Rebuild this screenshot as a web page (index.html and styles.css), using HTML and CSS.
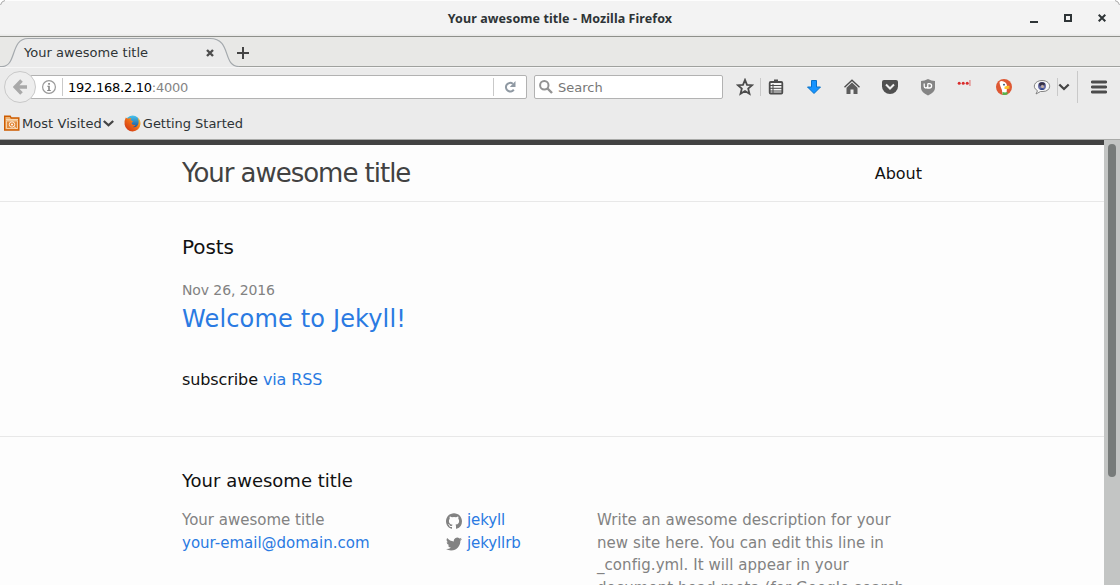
FILE: index.html
```
<!DOCTYPE html>
<html lang="en">
<head>
<meta charset="utf-8">
<title>Your awesome title</title>
<link rel="stylesheet" href="styles.css">
</head>
<body>
<div class="window">
  <header class="titlebar">
    <svg class="corner" width="5" height="5" viewBox="0 0 5 5"><path d="M0 0H5Q1 1 0 5Z" fill="#fff"/><path d="M5 .5Q1.300 1.300.5 5" fill="none" stroke="#aaa"/></svg>
    <span class="window-title">Your awesome title - Mozilla Firefox</span>
    <div class="window-buttons">
      <svg width="8" height="10" viewBox="0 0 8 10"><path d="M0 8h8v2H0z"/></svg>
      <svg width="8" height="10" viewBox="0 0 8 10"><path fill-rule="evenodd" d="M0 1h8v8H0zM2 3v4h4V3z"/></svg>
      <svg width="8" height="10" viewBox="0 0 8 10"><path d="M.7 1.700l6.600 6.600M7.300 1.700L.7 8.300" fill="none" stroke="#2e3436" stroke-width="2"/></svg>
    </div>
    <svg class="corner corner-right" width="5" height="5" viewBox="0 0 5 5"><path d="M0 0H5Q1 1 0 5Z" fill="#fff"/><path d="M5 .5Q1.300 1.300.5 5" fill="none" stroke="#aaa"/></svg>
  </header>

  <div class="tabs">
    <div class="tab">
      <svg class="tab-shape" width="240" height="30" viewBox="0 0 240 30"><path d="M0 29.500H2C17 29.500 10 1.500 28 1.500H210C232 1.500 222 29.500 239 29.500V30H0Z" fill="#ebebeb"/><path d="M0 29.500H2C17 29.500 10 1.500 28 1.500H210C232 1.500 222 29.500 239 29.500" fill="none" stroke="#a4a9ad" stroke-width="1.200"/></svg>
      <span class="tab-label">Your awesome title</span>
      <svg class="tab-close" width="8" height="8" viewBox="0 0 8 8"><path d="M1 1l6 6M7 1L1 7" stroke="#4d4d4d" stroke-width="2.400"/></svg>
    </div>
    <svg class="tab-new" width="12" height="12" viewBox="0 0 12 12"><path d="M6 0v12M0 6h12" stroke="#444" stroke-width="2"/></svg>
  </div>

  <nav class="toolbar">
    <div class="back"><svg width="14" height="16" viewBox="0 0 14 16"><path d="M8.500 1.500L2.200 8l6.300 6.500M2.500 8H14" fill="none" stroke="#a9a9a9" stroke-width="3.600"/></svg></div>
    <div class="urlbar">
      <svg class="info" width="14" height="14" viewBox="0 0 14 14"><circle cx="7" cy="7" r="6.400" fill="none" stroke="#999" stroke-width="1.200"/><path d="M6.200 3h1.700v1.700H6.200zM5.300 5.800h2.500v4.300h1v1H5.200v-1h1V6.800h-.9z" fill="#858585"/></svg>
      <i class="rule"></i>
      <span class="address">192.168.2.10<span class="port">:4000</span></span>
      <i class="rule rule-reload"></i>
      <svg class="reload" width="12" height="12" viewBox="0 0 12 12"><path d="M8.800 2.700A4.300 4.300 0 1 0 9.800 8.600" fill="none" stroke="#8f99a3" stroke-width="2"/><path d="M11.500 0v6H5.800z" fill="#8f99a3"/></svg>
    </div>
    <div class="search"><svg width="14" height="14" viewBox="0 0 14 14"><circle cx="5.300" cy="5.300" r="4.200" fill="none" stroke="#929292" stroke-width="2"/><path d="M8.500 8.500l4.500 4.500" stroke="#929292" stroke-width="2.400"/></svg><span>Search</span></div>
    <svg class="star" width="18" height="18" viewBox="0 0 18 18"><path d="M9 1.900l2 4.900 5.200.4-4 3.400 1.300 5.200L9 13l-4.500 2.800 1.300-5.200-4-3.400L7 6.800z" fill="none" stroke="#4c4c4c" stroke-width="1.800"/></svg>
    <i class="rule rule-bookmark"></i>
    <div class="tools">
      <svg width="18" height="18" viewBox="0 0 18 18"><path d="M7 1.500h4v2H7z" fill="#4c4c4c"/><rect x="2.700" y="4" width="12.600" height="11.500" rx="1" fill="#f5f5f5" stroke="#4c4c4c" stroke-width="1.800"/><path d="M2 7.500h14M2 10.300h14M2 13h14M6 6v9" stroke="#4c4c4c" stroke-width="1"/></svg>
      <svg width="18" height="18" viewBox="0 0 18 18"><path d="M6.500 2.500h5v6.500h4L9 15.500 2.500 9h4z" fill="#1593ff" stroke="#0872c8"/></svg>
      <svg width="18" height="18" viewBox="0 0 18 18"><path d="M1.500 9.300L9 2.200l7.500 7.100" fill="none" stroke="#4c4c4c" stroke-width="1.400"/><path d="M3.500 9.700L9 4.600l5.500 5.100V16H10.500v-4.500h-3V16h-4z" fill="#5c5c5c"/></svg>
      <svg width="18" height="18" viewBox="0 0 18 18"><path d="M3 2h12q2 0 2 2v4.500a8 7.500 0 0 1-16 0V4q0-2 2-2z" fill="#4f4f4f"/><path d="M5 6.500l4 4 4-4" fill="none" stroke="#eee" stroke-width="2"/></svg>
      <svg width="18" height="18" viewBox="0 0 18 18"><path d="M9 1q3.500 2 7 2v7q0 4-7 7.500Q2 14 2 10V3q3.500 0 7-2z" fill="#858585"/><path d="M5.200 5.500v2.700q0 1.800 1.700 1.800T8.600 8.200M8.800 5.500V10h1.500q2.300 0 2.300-2.200t-2.300-2.200h-1.500" fill="none" stroke="#fff" stroke-width="1.300"/></svg>
      <svg width="18" height="18" viewBox="0 0 18 18"><g fill="#d92b2b"><circle cx="2.200" cy="5.200" r="1.500"/><circle cx="6.200" cy="5.200" r="1.500"/><circle cx="10.200" cy="5.200" r="1.500"/><path d="M12.500 2h.9v6h-.9z" opacity=".75"/></g></svg>
      <svg width="18" height="18" viewBox="0 0 18 18"><circle cx="9" cy="9" r="8" fill="#de5833"/><path d="M4.500 4Q6 2.500 8.500 3.500 12 4.500 12 8.500L11.500 16H7.500Q7 11 5.500 8.500 4.500 6 4.500 4z" fill="#fff"/><path d="M9.500 8.700q3-1.300 5.500-.6l-1.500 1.200 2 .7q-3 1.600-6 .9z" fill="#fcc42c"/><path d="M7.500 14l2.500.5 2.500-.5v2.300q-2 1-5 .4z" fill="#55b34a"/><circle cx="9" cy="6.700" r=".9" fill="#294b66"/></svg>
      <svg width="18" height="18" viewBox="0 0 18 18"><path d="M9 2.500c10 0 10 11 1 11H7.500L3 16l1.500-3.300C-1.500 9.500 1.500 2.500 9 2.500z" fill="#f8f8f8" stroke="#777" stroke-width=".9"/><circle cx="9" cy="8" r="4" fill="#6a6fa8"/><path d="M6 5.500q3-2.500 6 0l-.8 2.500-2-1.500-2.500 2z" fill="#353044"/><circle cx="9.500" cy="8.600" r="1.500" fill="#c3ad9f"/><path d="M6.500 11q2.500-1.500 5 0-2.500 2-5 0z" fill="#233d86"/></svg>
    </div>
    <i class="rule rule-more"></i>
    <svg class="chevron" width="12" height="8" viewBox="0 0 12 8"><path d="M1.300 1.500L6 6l4.700-4.500" fill="none" stroke="#444" stroke-width="2.300"/></svg>
    <i class="rule rule-menu"></i>
    <svg class="menu" width="16" height="14" viewBox="0 0 16 14"><path d="M1.300 2h13.400M1.300 7h13.400M1.300 12h13.400" stroke="#4c4c4c" stroke-width="2.800" stroke-linecap="round"/></svg>
  </nav>

  <div class="bookmarks">
    <svg width="16" height="16" viewBox="0 0 16 16"><path d="M.7 1.200h5.500l1 1.800h7.600v12H.7z" fill="#edb477" stroke="#ce5c00" stroke-width="1.400"/><path d="M2 4.500h12M2.500 6v7.500h11V6z" fill="#e28b3d" stroke="#fce5c7" stroke-width=".7"/><circle cx="8" cy="9.500" r="2.700" fill="#e18230" stroke="#fff3e5" stroke-width="1"/><circle cx="8" cy="9.500" r="1" fill="#fff"/><path d="M10 11.500l2 2" stroke="#fff"/></svg>
    <span class="most-visited">Most Visited</span>
    <svg class="drop" width="11" height="7" viewBox="0 0 11 7"><path d="M.8 1l4.700 4.300L10.200 1" fill="none" stroke="#444" stroke-width="2.300"/></svg>
    <svg class="firefox" width="17" height="17" viewBox="0 0 17 17"><defs><linearGradient id="globe" x2="0" y2="1"><stop stop-color="#49c5ee"/><stop offset="1" stop-color="#153f88"/></linearGradient><linearGradient id="fox" x1="0" y1="1" x2="1" y2="0"><stop stop-color="#c92c17"/><stop offset=".5" stop-color="#ed6816"/><stop offset="1" stop-color="#ffd335"/></linearGradient></defs><circle cx="8.700" cy="7.500" r="7" fill="url(#globe)"/><path d="M1.800 2.500l2 1.200Q5.500 2.700 7.300 3L6.500 5 9 6.200 7.500 8.300q.7 2.500 4.200 1.500-1 2.700-4.200 2 5.500 1.700 7-3.500.5-2.500-.8-5.500 3.100 2.500 2.800 6.200A8 8 0 0 1 .6 9.500Q.1 5.500 1.800 2.500z" fill="url(#fox)"/></svg>
    <span>Getting Started</span>
  </div>

  <div class="viewport">
    <div class="site">
      <header class="site-header"><div class="wrapper header-row"><a class="site-title">Your awesome title</a><a class="about">About</a></div></header>
      <main class="page-content"><div class="wrapper">
        <h1 class="posts-heading">Posts</h1>
        <article class="post"><span class="post-meta">Nov 26, 2016</span><h2 class="post-link">Welcome to Jekyll!</h2></article>
        <p class="subscribe">subscribe <a class="link">via RSS</a></p>
      </div></main>
      <footer class="site-footer"><div class="wrapper">
        <h2 class="footer-heading">Your awesome title</h2>
        <div class="footer-cols">
          <div>Your awesome title<br><a class="link">your-email@domain.com</a></div>
          <div>
            <div class="social"><svg width="16" height="16" viewBox="0 0 16 16"><path fill="#828282" d="M8 .2C3.580.2 0 3.780 0 8.200c0 3.530 2.290 6.530 5.470 7.590.4.070.55-.17.55-.38 0-.19-.01-.82-.01-1.490-2.010.37-2.530-.49-2.690-.94-.09-.23-.48-.94-.82-1.130-.28-.15-.68-.52-.01-.53.63-.01 1.080.58 1.230.82.72 1.210 1.870.87 2.330.66.07-.52.28-.87.51-1.070-1.780-.2-3.640-.89-3.640-3.950 0-.87.31-1.590.82-2.150-.08-.2-.36-1.020.08-2.120 0 0 .67-.21 2.200.82a7.500 7.500 0 0 1 4 0c1.530-1.040 2.200-.82 2.200-.82.44 1.100.16 1.920.08 2.120.51.56.82 1.270.82 2.150 0 3.070-1.870 3.750-3.650 3.950.29.25.54.73.54 1.480 0 1.070-.01 1.930-.01 2.200 0 .21.15.46.55.38A8 8 0 0 0 16 8.200C16 3.780 12.420.2 8 .2z"/></svg><a class="link">jekyll</a></div>
            <div class="social"><svg width="16" height="16" viewBox="0 0 16 16"><path fill="#828282" d="M15.969 3.058c-.586.260-1.217.436-1.878.515.675-.405 1.194-1.045 1.438-1.809-.632.375-1.332.647-2.076.793a3.270 3.270 0 0 0-5.570 2.980C5.166 5.400 2.755 4.098 1.140 2.117a3.270 3.270 0 0 0 1.011 4.363 3.260 3.260 0 0 1-1.480-.409v.041a3.270 3.270 0 0 0 2.622 3.204 3.300 3.300 0 0 1-1.476.056 3.270 3.270 0 0 0 3.053 2.269A6.560 6.560 0 0 1 .031 12.995a9.250 9.250 0 0 0 5.009 1.468c6.011 0 9.298-4.980 9.298-9.298l-.011-.423a6.600 6.600 0 0 0 1.642-1.684z"/></svg><a class="link">jekyllrb</a></div>
          </div>
          <p class="description">Write an awesome description for your new site here. You can edit this line in _config.yml. It will appear in your document head meta (for Google search</p>
        </div>
      </div></footer>
    </div>
    <div class="scrollbar"><div class="thumb"></div></div>
  </div>
</div>
</body>
</html>
```
FILE: styles.css
```
* { box-sizing: border-box; }
body { margin: 0; background: #fff; overflow: hidden; font-family: "DejaVu Sans", sans-serif; }
svg { display: block; flex: none; }
.window { width: 1120px; height: 585px; overflow: hidden; display: flex; flex-direction: column; background: #ebebeb; }
.titlebar { position: relative; height: 37px; flex: none; display: flex; align-items: center; justify-content: center; background: linear-gradient(#fdfdfd 1px, #f3f3f3 1px 34px, #e9e9e8 35px); border-bottom: 1px solid #8e908b; }
.corner { position: absolute; left: 0; top: 0; }
.corner-right { left: auto; right: 0; transform: scaleX(-1); }
.window-title { font: bold 12.500px/18px "Noto Sans", sans-serif; letter-spacing: .08px; padding-top: 2px; color: #2e3436; }
.window-buttons { position: absolute; right: 14px; top: 13px; display: flex; gap: 26px; fill: #2e3436; }
.tabs { height: 30px; flex: none; display: flex; align-items: center; background: #e8e8e6; border-bottom: 1px solid #9fa19e; font-size: 13px; color: #2e3436; }
.tab { position: relative; width: 237px; height: 30px; display: flex; align-items: center; padding: 2px 22px 0 24px; justify-content: space-between; }
.tab-shape { position: absolute; left: 0; top: 0; }
.tab-label, .tab-close { position: relative; }
.tab-label { line-height: 18px; letter-spacing: .04px; }
.tab-close { margin-right: 1px; }
.tab-new { margin-top: 3px; }
.toolbar { height: 40px; flex: none; display: flex; align-items: center; padding: 0 0 1px 4px; border-top: 1px solid #f6f6f6; }
.back { width: 32px; height: 32px; flex: none; border: 1px solid #c9c9c9; border-radius: 50%; background: #eee; display: flex; align-items: center; justify-content: center; z-index: 1; }
.urlbar { width: 497px; height: 24px; margin-left: -6px; padding-left: 11px; flex: none; display: flex; align-items: center; background: #fff; border: 1px solid #b2b2b2; border-radius: 2px; font-size: 13px; }
.rule { width: 1px; height: 18px; background: #c9c9c9; flex: none; }
.info + .rule { margin: 0 5px 0 6px; }
.address { color: #000; line-height: 18px; padding-top: 1px; letter-spacing: -.26px; }
.port { color: #858585; }
.address { letter-spacing: -.25px; }
.rule-reload { margin-left: auto; }
.reload { margin: 0 10px; }
.search { width: 189px; height: 24px; margin-left: 7px; padding-left: 4px; flex: none; display: flex; align-items: center; gap: 5px; background: #fff; border: 1px solid #b2b2b2; border-radius: 2px; font-size: 13px; color: #777; }
.search svg { margin-top: -1px; }
.search span { padding-top: 1px; }
.star { margin-left: 13px; }
.rule-bookmark { margin: 0 6px; }
.tools { display: flex; gap: 20px; }
.rule-more { margin-left: 6px; }
.chevron { margin-left: 0; }
.rule-menu { height: 32px; margin-left: 7px; }
.menu { margin-left: 13px; }
.bookmarks { height: 33px; flex: none; display: flex; align-items: center; padding-left: 4px; border-bottom: 1px solid #a9aaa8; font-size: 13px; color: #2e3436; }
.most-visited { margin-left: 2px; letter-spacing: .06px; }
.drop { margin-left: 1px; }
.firefox { margin-left: 10px; margin-right: 2px; }
.firefox + span { letter-spacing: -.03px; }
.viewport { flex: 1; min-height: 0; display: flex; overflow: hidden; background: #fdfdfd; }
.site { width: 1104px; line-height: 24px; font-size: 16px; color: #111; }
.wrapper { width: 800px; margin: 0 auto; padding: 0 30px; }
.site-header { height: 62px; border-top: 5px solid #424242; border-bottom: 1px solid #e8e8e8; }
.header-row { display: flex; justify-content: space-between; line-height: 56px; }
.site-title { font-size: 26px; letter-spacing: -1.030px; color: #424242; }
.about { padding-top: 1px; }
.page-content { padding: 30px 0; height: 234px; }
h1, h2, p { margin: 0; font-weight: 400; }
.posts-heading { font-size: 20px; line-height: 30px; letter-spacing: -.1px; margin-bottom: 15px; }
.post { margin-bottom: 31px; }
.post-meta { display: block; height: 24px; font-size: 14px; line-height: 26px; letter-spacing: -.1px; color: #828282; }
.post-link { font-size: 24px; line-height: 36px; letter-spacing: .16px; color: #2a7ae2; }
.subscribe { letter-spacing: -.1px; }
.link { color: #2a7ae2; }
.site-footer { padding: 30px 0; border-top: 1px solid #e8e8e8; }
.footer-heading { font-size: 18px; line-height: 27px; margin-bottom: 15px; }
.footer-cols { display: grid; grid-template-columns: 264px 151px 320px; font-size: 15px; line-height: 22.500px; color: #828282; }
.description { letter-spacing: .06px; }
.social { display: flex; align-items: center; gap: 5px; letter-spacing: -.1px; }
.social svg { margin-top: 2px; }
.scrollbar { width: 16px; background: #c3c5c4; padding: 4px 4px 0; }
.thumb { height: 333px; border-radius: 4px; background: #777b7a; }
```
